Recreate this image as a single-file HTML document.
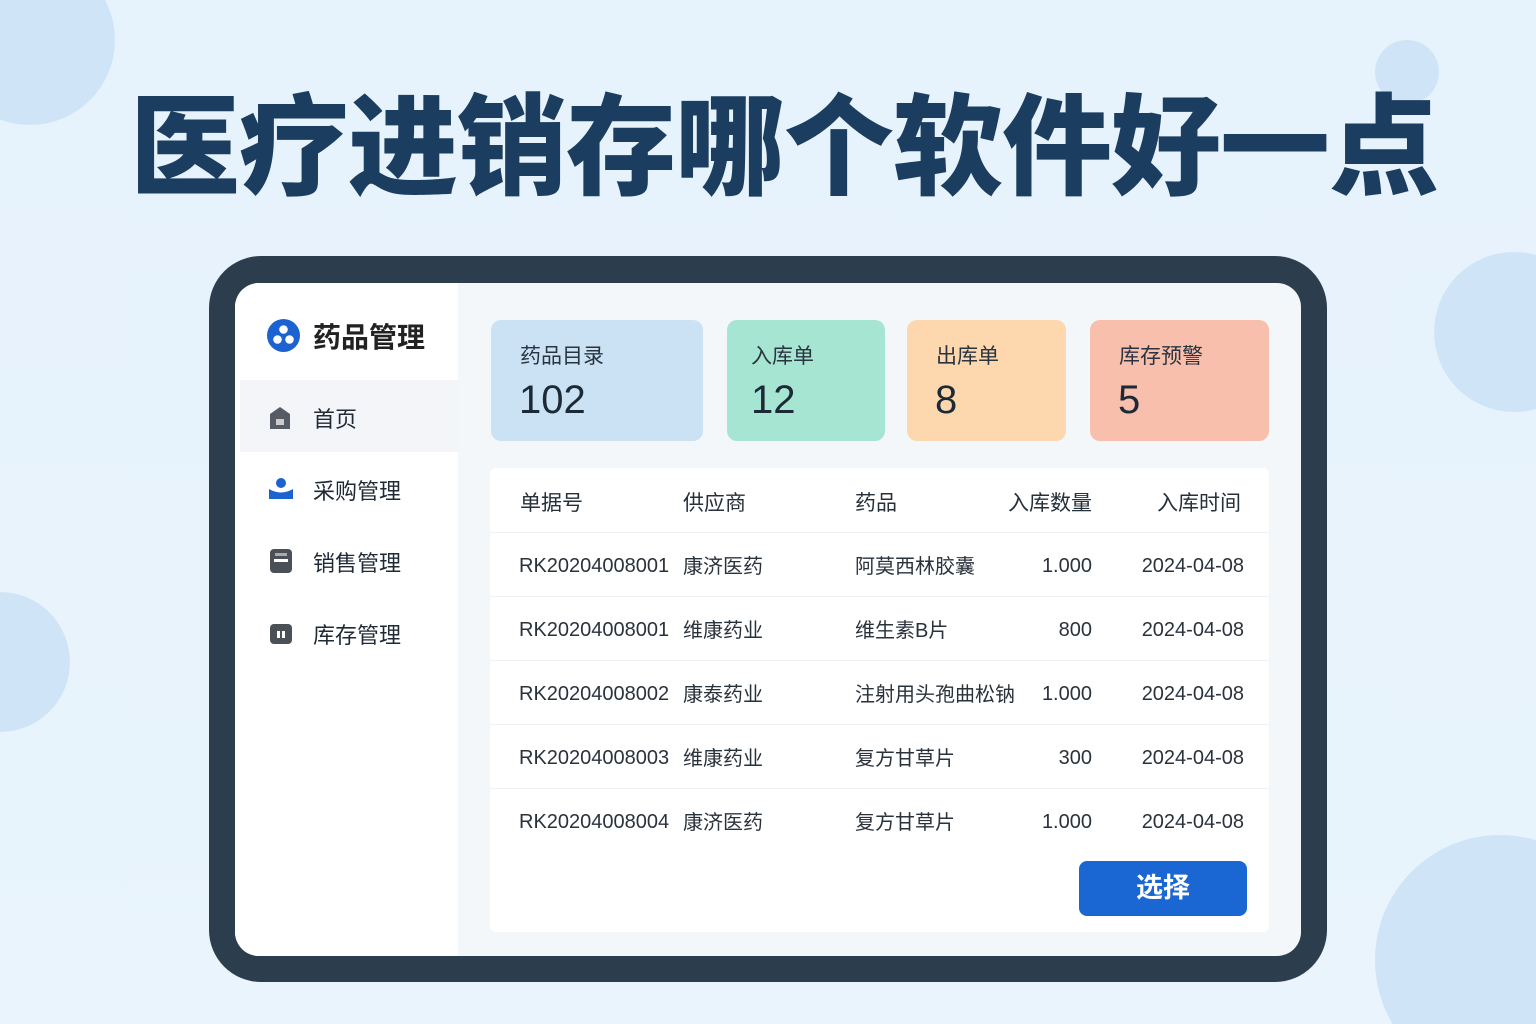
<!DOCTYPE html>
<html><head><meta charset="utf-8"><style>
*{margin:0;padding:0;box-sizing:border-box}
html,body{width:1536px;height:1024px;overflow:hidden}
body{position:relative;background:linear-gradient(180deg,#e6f2fc,#e9f4fc);font-family:"Liberation Sans","Noto Sans CJK SC",sans-serif;color:#1f2a36}
.a{position:absolute;white-space:nowrap}
h1{position:absolute;left:130px;top:88px;font-size:110px;font-weight:900;color:#1b3d5f;letter-spacing:-1px;white-space:nowrap;line-height:1.1}
.frame{position:absolute;left:209px;top:256px;width:1118px;height:726px;border-radius:52px;background:#2c3e4d}
.screen{position:absolute;left:235px;top:283px;width:1066px;height:673px;border-radius:24px;background:#f4f7fa;overflow:hidden}
.side{position:absolute;left:0;top:0;width:223px;height:100%;background:#fff}
.card{position:absolute;top:37px;height:121px;border-radius:10px}
.card .l{position:absolute;left:29px;top:20px;font-size:21px;color:#2a3440}
.card .n{position:absolute;left:28px;top:58px;font-size:40px;color:#1c2a38}
.tbl{position:absolute;left:255px;top:185px;width:779px;height:464px;background:#fff;border-radius:6px}
.row{position:absolute;left:0;width:779px;height:64px;border-top:1px solid #eef1f4;font-size:20px;color:#2a323c}
.row span{position:absolute;top:22px;white-space:nowrap}
.row span.z{top:17px}
.hd{font-size:21px;color:#26303a;border-top:none}
.hd span{top:19px}
</style></head><body>
<svg style="position:absolute;left:0;top:0" width="1536" height="1024" viewBox="0 0 1536 1024">
<g fill="#cfe5f7">
<circle cx="30" cy="40" r="85"/>
<circle cx="1407" cy="72" r="32"/>
<circle cx="1514" cy="332" r="80"/>
<circle cx="0" cy="662" r="70"/>
<circle cx="1500" cy="960" r="125"/>
</g></svg>
<h1>医疗进销存哪个软件好一点</h1>
<div class="frame"></div>
<div class="screen">
 <div class="side">
  <svg class="a" style="left:32px;top:36px" width="33" height="33" viewBox="0 0 33 33"><circle cx="16.5" cy="16.5" r="16.5" fill="#1c62d0"/><circle cx="16.5" cy="10.5" r="4.3" fill="#fff"/><circle cx="10.5" cy="20.5" r="4.3" fill="#fff"/><circle cx="22.5" cy="20.5" r="4.3" fill="#fff"/></svg>
  <div class="a" style="left:78px;top:33px;font-size:28px;font-weight:bold;color:#222">药品管理</div>
  <div class="a" style="left:5px;top:97px;width:218px;height:72px;background:#f3f5f8"></div>
  <svg class="a" style="left:34px;top:123px" width="22" height="24" viewBox="0 0 22 24"><path d="M1 8 L11 1 L21 8 V23 H1Z" fill="#555c66"/><rect x="7" y="13" width="8" height="6" fill="#ccc"/></svg>
  <div class="a" style="left:78px;top:119px;font-size:22px">首页</div>
  <svg class="a" style="left:34px;top:194px" width="24" height="24" viewBox="0 0 24 24"><circle cx="12" cy="6" r="5" fill="#1c62d0"/><path d="M0 12 Q12 19 24 12 V22 H0Z" fill="#1c62d0"/></svg>
  <div class="a" style="left:78px;top:191px;font-size:22px">采购管理</div>
  <svg class="a" style="left:35px;top:266px" width="22" height="24" viewBox="0 0 22 24"><rect width="22" height="24" rx="4" fill="#4a5058"/><rect x="4" y="10" width="14" height="3" fill="#fff"/><rect x="5" y="4" width="12" height="3" fill="#aaa"/></svg>
  <div class="a" style="left:78px;top:263px;font-size:22px">销售管理</div>
  <svg class="a" style="left:35px;top:341px" width="22" height="20" viewBox="0 0 22 20"><rect width="22" height="20" rx="4" fill="#4a5058"/><rect x="7" y="7" width="3" height="7" fill="#fff"/><rect x="12" y="7" width="3" height="7" fill="#fff"/></svg>
  <div class="a" style="left:78px;top:335px;font-size:22px">库存管理</div>
 </div>
 <div class="card" style="left:256px;width:212px;background:#cbe2f5"><div class="l">药品目录</div><div class="n">102</div></div>
 <div class="card" style="left:492px;width:158px;background:#a6e5d1"><div class="l" style="left:24px">入库单</div><div class="n" style="left:24px">12</div></div>
 <div class="card" style="left:672px;width:159px;background:#fdd7ae"><div class="l">出库单</div><div class="n">8</div></div>
 <div class="card" style="left:855px;width:179px;background:#f8bfac"><div class="l">库存预警</div><div class="n">5</div></div>
 <div class="tbl">
  <div class="row hd" style="top:0"><span style="left:30px">单据号</span><span style="left:193px">供应商</span><span style="left:365px">药品</span><span style="right:177px">入库数量</span><span style="right:28px">入库时间</span></div>
  <div class="row" style="top:64px"><span style="left:29px">RK20204008001</span><span class="z" style="left:193px">康济医药</span><span class="z" style="left:365px">阿莫西林胶囊</span><span style="right:177px">1.000</span><span style="right:25px">2024-04-08</span></div>
  <div class="row" style="top:128px"><span style="left:29px">RK20204008001</span><span class="z" style="left:193px">维康药业</span><span class="z" style="left:365px">维生素B片</span><span style="right:177px">800</span><span style="right:25px">2024-04-08</span></div>
  <div class="row" style="top:192px"><span style="left:29px">RK20204008002</span><span class="z" style="left:193px">康泰药业</span><span class="z" style="left:365px">注射用头孢曲松钠</span><span style="right:177px">1.000</span><span style="right:25px">2024-04-08</span></div>
  <div class="row" style="top:256px"><span style="left:29px">RK20204008003</span><span class="z" style="left:193px">维康药业</span><span class="z" style="left:365px">复方甘草片</span><span style="right:177px">300</span><span style="right:25px">2024-04-08</span></div>
  <div class="row" style="top:320px"><span style="left:29px">RK20204008004</span><span class="z" style="left:193px">康济医药</span><span class="z" style="left:365px">复方甘草片</span><span style="right:177px">1.000</span><span style="right:25px">2024-04-08</span></div>
 </div>
 <div class="a" style="left:844px;top:578px;width:168px;height:55px;background:#1a66d2;border-radius:8px;color:#fff;font-size:27px;font-weight:bold;text-align:center;line-height:55px">选择</div>
</div>
</body></html>
